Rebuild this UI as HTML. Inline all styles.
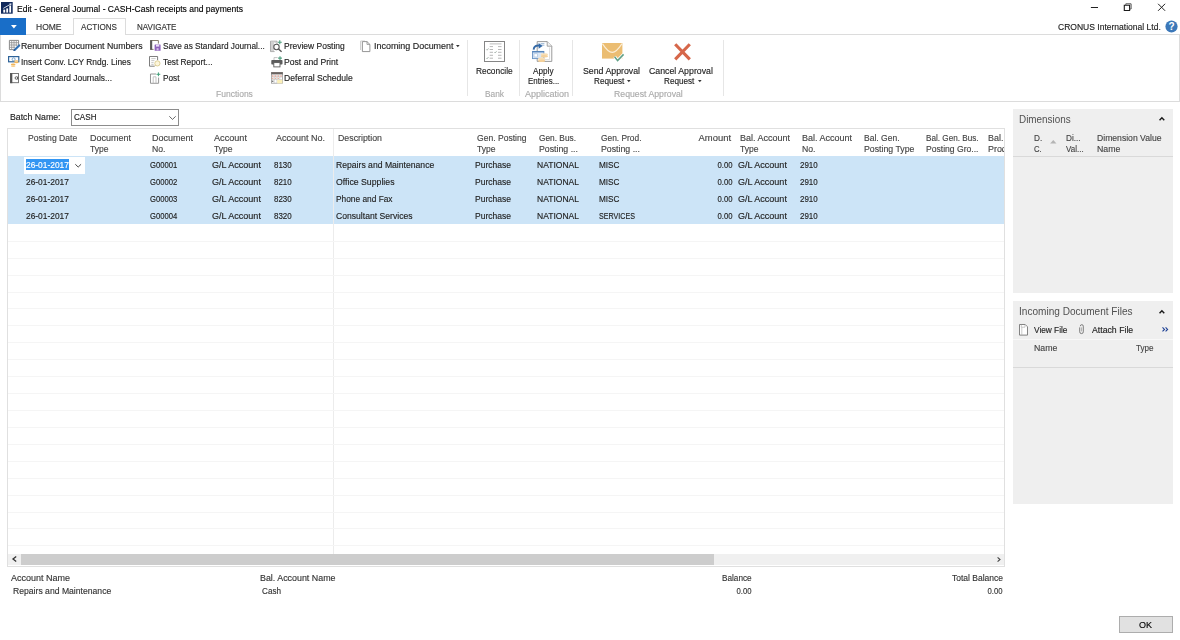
<!DOCTYPE html>
<html lang="en">
<head>
<meta charset="utf-8">
<title>Edit - General Journal - CASH-Cash receipts and payments</title>
<style>
html,body{margin:0;padding:0;}
body{width:1180px;height:640px;overflow:hidden;background:#fff;position:relative;font-family:"Liberation Sans",sans-serif;font-size:9px;color:#222;}
.t{position:absolute;white-space:pre;display:block;-webkit-text-stroke:0.14px;}
.b{position:absolute;box-sizing:border-box;}
svg{position:absolute;overflow:visible;}
.hl{position:absolute;left:8px;width:996px;height:1px;background:#f5f5f5;}
.sep{position:absolute;top:40px;width:1px;height:56px;background:#e6e6e6;}
</style>
</head>
<body>
<!-- ===== title bar ===== -->
<svg id="appicon" style="left:1.4px;top:2.1px" width="11.7" height="11.7" viewBox="0 0 11.7 11.7">
  <rect x="0" y="0" width="11.7" height="11.7" fill="#10295c"/>
  <rect x="2.3" y="7.6" width="1.9" height="3" fill="#fff"/>
  <rect x="5.3" y="6.4" width="1.8" height="4.2" fill="#fff"/>
  <rect x="8.3" y="3.6" width="1.8" height="7" fill="#fff"/>
  <path d="M2.3 6.4 L9.6 2.2" stroke="#e8ecf4" stroke-width="0.9" fill="none"/>
  <path d="M8.2 1.5 L10.6 1.5 L10 3.7 Z" fill="#e8ecf4"/>
</svg>
<svg id="winbtns" style="left:1085px;top:0" width="95" height="16" viewBox="0 0 95 16">
  <path d="M5.9 7.5 H13" stroke="#222" stroke-width="1" fill="none"/>
  <path d="M39.3 5.3 H44.6 V10.5 H39.3 Z" stroke="#1a1a1a" stroke-width="1.1" fill="none"/>
  <path d="M40.8 5.3 V3.8 H46.1 V9 H44.6" stroke="#555" stroke-width="1" fill="none"/>
  <path d="M73.1 3.8 L80.1 10.8 M80.1 3.8 L73.1 10.8" stroke="#222" stroke-width="1" fill="none"/>
</svg>
<!-- help -->
<svg id="help" style="left:1165.4px;top:20.1px" width="13" height="13" viewBox="0 0 13 13">
  <circle cx="6.5" cy="6.5" r="6.1" fill="#3c78b9"/>
  <text x="6.5" y="10" font-family="Liberation Sans, sans-serif" font-weight="bold" font-size="10" fill="#fff" text-anchor="middle">?</text>
</svg>

<!-- ===== tab strip ===== -->
<div class="b" id="ribbon" style="left:0;top:34px;width:1179.5px;height:68px;border:1px solid #dcdcdc;background:#fff"></div>
<div class="b" id="appbtn" style="left:0;top:18px;width:26px;height:16.6px;background:#196ec8"></div>
<svg style="left:10.8px;top:24.7px" width="5.8" height="3.5" viewBox="0 0 7 4"><path d="M0 0 H7 L3.5 4 Z" fill="#fff"/></svg>
<div class="b" id="acttab" style="left:73px;top:18px;width:52.5px;height:17px;border:1px solid #dcdcdc;border-bottom:none;background:#fff"></div>

<!-- ===== ribbon separators ===== -->
<div class="sep" style="left:467px"></div>
<div class="sep" style="left:519px"></div>
<div class="sep" style="left:572px"></div>
<div class="sep" style="left:723px"></div>

<!-- ===== ribbon small icons (12x12) ===== -->
<!-- Renumber Document Numbers: grid + blue pencil -->
<svg style="left:8.8px;top:40.3px" width="11" height="11" viewBox="0 0 11 11">
  <path d="M0.4 0.4 H9.6 V5 M0.4 0.4 V9.6 H4.6" stroke="#7d7d7d" stroke-width="0.9" fill="none"/>
  <path d="M0.4 2.7 H9.6 M0.4 5 H8.6 M0.4 7.3 H6.2 M2.7 0.4 V9.6 M5 0.4 V8.6 M7.3 0.4 V6.2" stroke="#8f8f8f" stroke-width="0.8" fill="none"/>
  <path d="M5.6 10 L10.2 5.4" stroke="#2f6fb3" stroke-width="2.1" stroke-linecap="round" fill="none"/>
  <path d="M4.1 11 L5 8.9 L6.3 10.2 Z" fill="#274f87"/>
</svg>
<!-- Insert Conv. LCY Rndg. Lines: banknote + coins -->
<svg style="left:8.3px;top:56.2px" width="11.4" height="11.2" viewBox="0 0 11.4 11.2">
  <rect x="0.6" y="0.6" width="10.2" height="5.2" fill="#fff" stroke="#2e6399" stroke-width="1.2"/>
  <circle cx="5.6" cy="3.3" r="1.5" fill="none" stroke="#5b8fc2" stroke-width="0.8"/>
  <ellipse cx="8.4" cy="6.3" rx="2.2" ry="1" fill="#f3b65a"/>
  <ellipse cx="8.4" cy="4.9" rx="2.2" ry="1" fill="#f7cf8e"/>
  <ellipse cx="5.2" cy="8.4" rx="2.3" ry="0.9" fill="#f3b65a"/>
  <ellipse cx="5.2" cy="10.1" rx="2.3" ry="0.9" fill="#f7cf8e"/>
</svg>
<!-- Get Standard Journals: book -->
<svg style="left:9.9px;top:73.1px" width="9" height="10.4" viewBox="0 0 9 10.4">
  <rect x="0.5" y="0.5" width="8" height="9.2" fill="#fff" stroke="#6a6a6a" stroke-width="0.9"/>
  <rect x="0.2" y="0.2" width="2.1" height="10" fill="#555"/>
  <circle cx="6.4" cy="5" r="1.3" fill="none" stroke="#555" stroke-width="0.9"/>
  <path d="M7.7 3.6 V6.4" stroke="#555" stroke-width="0.8"/>
</svg>
<!-- Save as Standard Journal: book + purple floppy -->
<svg style="left:150.3px;top:40.3px" width="10.8" height="11" viewBox="0 0 10.8 11">
  <path d="M0.5 0.5 H8.4 V3.6 M0.5 0.5 V9.4 H3.6" fill="none" stroke="#7a6f5e" stroke-width="0.9"/>
  <rect x="0.2" y="0.2" width="2" height="9.6" fill="#5a5a5a"/>
  <rect x="4.6" y="4.6" width="6" height="6.2" rx="0.5" fill="#8f63bb"/>
  <rect x="6" y="4.6" width="3.2" height="2" fill="#e9def5"/>
  <rect x="6.6" y="8.2" width="2" height="2.2" fill="#d4c0ea"/>
</svg>
<!-- Test Report: doc + yellow circle -->
<svg style="left:149px;top:56.2px" width="11.8" height="10.8" viewBox="0 0 11.8 10.8">
  <path d="M0.5 0.5 H8.6 V4.2 M0.5 0.5 V10.2 H5.6" fill="#fff" stroke="#6f6f6f" stroke-width="0.9"/>
  <path d="M2.3 2.6 H6.6 M2.3 4.6 H5.4 M2.3 6.6 H4.6 M2.3 8.4 H4.6" stroke="#b9b9b9" stroke-width="0.8"/>
  <circle cx="8.4" cy="7.4" r="2.6" fill="#fdf6dc" stroke="#d9c98d" stroke-width="0.9"/>
  <path d="M6.2 9.4 L5.2 10.5" stroke="#bfb07a" stroke-width="0.9"/>
</svg>
<!-- Post: doc columns + green plus -->
<svg style="left:150.3px;top:72px" width="10.6" height="11.8" viewBox="0 0 10.6 11.8">
  <path d="M0.5 2 H6 M0.5 2 V11.3 H8.6 V5.6" fill="none" stroke="#8a8a8a" stroke-width="0.9"/>
  <path d="M3.2 4.8 V11 M6 4.8 V11 M3.2 4.8 H6" stroke="#b4b4b4" stroke-width="0.8" fill="none"/>
  <path d="M8.4 0.4 V4.2 M6.5 2.3 H10.3" stroke="#3f9f78" stroke-width="1"/>
</svg>
<!-- Preview Posting: doc + magnifier + plus -->
<svg style="left:270.3px;top:39.5px" width="12.2" height="12.2" viewBox="0 0 12.2 12.2">
  <path d="M0.5 1.2 H7 V4 M0.5 1.2 V11.6 H4.6" fill="none" stroke="#a3a3a3" stroke-width="0.9"/>
  <rect x="1" y="1.7" width="3" height="9.4" fill="#d2d2d2"/>
  <path d="M4.4 2.6 H6.4" stroke="#c4c4c4" stroke-width="0.8"/>
  <circle cx="6.5" cy="7" r="2.7" fill="#fff" stroke="#555" stroke-width="1.1"/>
  <path d="M8.5 9 L11.6 11.8" stroke="#555" stroke-width="1.4"/>
  <path d="M9.8 0.2 V4.2 M7.8 2.2 H11.8" stroke="#4c9d7c" stroke-width="1.1"/>
</svg>
<!-- Post and Print: printer + plus -->
<svg style="left:270.6px;top:56.4px" width="12" height="11.4" viewBox="0 0 12 11.4">
  <path d="M3 4 V1.6 H6.6" fill="none" stroke="#b5b5b5" stroke-width="0.8"/>
  <rect x="0.3" y="4" width="11.2" height="4.6" rx="0.8" fill="#5c5c5c"/>
  <rect x="2.8" y="6.6" width="6.2" height="4.3" fill="#fff" stroke="#5c5c5c" stroke-width="0.9"/>
  <path d="M9 0.2 V4 M7.1 2.1 H10.9" stroke="#4c9d7c" stroke-width="1.1"/>
</svg>
<!-- Deferral Schedule: calendar -->
<svg style="left:270.5px;top:72px" width="12" height="11.8" viewBox="0 0 12 11.8">
  <rect x="0.4" y="0.4" width="11.2" height="10.8" fill="#fff" stroke="#9a9a9a" stroke-width="0.8"/>
  <rect x="0.2" y="0.2" width="11.6" height="2.2" fill="#6a6360"/>
  <path d="M0.4 5 H11.6 M0.4 7.6 H11.6 M3.2 2.4 V11 M6 2.4 V11 M8.8 2.4 V11" stroke="#bdbdbd" stroke-width="0.6"/>
  <path d="M1 4 H11" stroke="#d9705a" stroke-width="0.9" stroke-dasharray="1.4 1.4"/>
  <path d="M1 6.4 H8.6" stroke="#e3a08a" stroke-width="0.9" stroke-dasharray="1.4 1.4"/>
  <rect x="6.2" y="7.8" width="5.2" height="3.6" fill="#fbefb8"/>
  <rect x="0.8" y="8.6" width="1.6" height="1.4" fill="#7a7a7a"/>
</svg>
<!-- Incoming Document: page -->
<svg style="left:360.2px;top:39.6px" width="10.4" height="12.2" viewBox="0 0 10.4 12.2">
  <path d="M0.6 1 H5 M0.6 1 V10" stroke="#cfcfcf" stroke-width="1.1" fill="none"/>
  <path d="M2.4 1.6 H7 L9.9 4.4 V11.6 H2.4 Z" fill="#fff" stroke="#8a8a8a" stroke-width="0.9"/>
  <path d="M7 1.6 V4.4 H9.9" fill="none" stroke="#8a8a8a" stroke-width="0.8"/>
</svg>

<!-- ===== big icons ===== -->
<!-- Reconcile -->
<svg style="left:484px;top:41px" width="21" height="21" viewBox="0 0 21 21">
  <rect x="0.5" y="0.5" width="20" height="20" fill="#fff" stroke="#858585" stroke-width="1"/>
  <path d="M5.7 2.9 H17.5" stroke="#ababab" stroke-width="0.8"/>
  <path d="M5.7 5.6 H9 M14 5.6 H17.5 M5.7 8.5 H9 M14 8.5 H17.5 M5.7 11.3 H9 M14 11.3 H17.5 M5.7 14.3 H9 M14 14.3 H17.5 M5.7 17.2 H9 M14 17.2 H17.5" stroke="#a6a6a6" stroke-width="0.8"/>
  <path d="M2.3 8.4 L3.1 9.2 L4.5 7.4 M10.4 11.2 L11.2 12 L12.6 10.2 M2.3 17 L3.1 17.8 L4.5 16" stroke="#9aa8a0" stroke-width="0.8" fill="none"/>
</svg>
<!-- Apply Entries -->
<svg style="left:532px;top:41px" width="20.6" height="22" viewBox="0 0 20.6 22">
  <path d="M5.2 0.6 H15.2 L19.8 5.2 V20.4 H5.2 Z" fill="#fff" stroke="#8f8f8f" stroke-width="0.9"/>
  <path d="M15.2 0.6 V5.2 H19.8" fill="#f1f1f1" stroke="#8f8f8f" stroke-width="0.8"/>
  <path d="M17.6 6.4 V18.6 H9" fill="none" stroke="#d6d6d6" stroke-width="0.9"/>
  <path d="M8.6 2.6 H12.4 M8.6 4.2 H12.4" stroke="#86a7c9" stroke-width="0.8"/>
  <path d="M1.6 8.6 C1.8 5.2 4.6 4 7.6 4.6" stroke="#3469a6" stroke-width="1.9" fill="none"/>
  <path d="M6.6 1.9 L10.6 5 L6.6 7.8 Z" fill="#3469a6"/>
  <rect x="0.5" y="10.4" width="11.4" height="7.2" fill="#dbe7f5" stroke="#6a93c4" stroke-width="0.9"/>
  <rect x="0.5" y="10.2" width="11.4" height="1.2" fill="#4f7fb8"/>
  <rect x="2" y="12.8" width="3.6" height="3.2" fill="#fff" stroke="#9dbbdc" stroke-width="0.6"/>
  <ellipse cx="12.4" cy="13.4" rx="3.6" ry="1.2" fill="#f8deb4"/>
  <ellipse cx="12.4" cy="15.2" rx="3.6" ry="1.2" fill="#f5d19a"/>
  <ellipse cx="9.6" cy="17.8" rx="3.6" ry="1.2" fill="#f8deb4"/>
  <ellipse cx="9.6" cy="19.8" rx="3.6" ry="1.3" fill="#f5d19a"/>
</svg>
<!-- Send Approval Request -->
<svg style="left:601.7px;top:43.3px" width="22.4" height="19.4" viewBox="0 0 22.4 19.4">
  <rect x="0" y="0" width="20.4" height="15.6" fill="#ebbd72"/>
  <path d="M0.4 0.6 C4 6.2 7.6 9.4 10.2 9.4 C12.8 9.4 16.4 6.2 20 0.6" stroke="#fbeed7" stroke-width="1.1" fill="none"/>
  <path d="M12.6 13.8 L15.6 17.6 L21.6 11.4" stroke="#fff" stroke-width="3.2" fill="none"/>
  <path d="M12.6 13.8 L15.6 17.6 L21.6 11.4" stroke="#5fa086" stroke-width="1.5" fill="none"/>
</svg>
<!-- Cancel Approval Request -->
<svg style="left:673.8px;top:42.8px" width="17" height="17.6" viewBox="0 0 17 17.6">
  <path d="M1.2 1.2 L15.8 16.4 M15.8 1.2 L1.2 16.4" stroke="#d6674a" stroke-width="3.1" fill="none"/>
</svg>


<!-- ===== batch name ===== -->
<div class="b" id="combo" style="left:71px;top:109px;width:108px;height:16.5px;border:1px solid #8c8c8c;background:#fff"></div>
<svg style="left:168.5px;top:115.5px" width="7" height="4" viewBox="0 0 7 4"><path d="M0.3 0.3 L3.5 3.4 L6.7 0.3" stroke="#555" stroke-width="0.9" fill="none"/></svg>

<!-- ===== grid ===== -->
<div class="b" id="grid" style="left:7px;top:128px;width:998px;height:438.5px;border:1px solid #e0e0e0;background:#fff"></div>
<div class="b" id="selrows" style="left:8px;top:156.3px;width:996px;height:68px;background:#cce4f7"></div>
<div class="b" id="frozen" style="left:333px;top:129px;width:1px;height:425px;background:#ececec"></div>
<div class="b" id="actcell" style="left:24px;top:157px;width:61px;height:16.8px;background:#fff"></div>
<div class="b" id="seltext" style="left:26px;top:159.2px;width:43.3px;height:10.6px;background:#3396f3"></div>
<svg style="left:75px;top:164px" width="6.4" height="3.6" viewBox="0 0 7 4"><path d="M0.3 0.3 L3.5 3.4 L6.7 0.3" stroke="#444" stroke-width="1.1" fill="none"/></svg>
<div class="hl" style="top:240.8px"></div>
<div class="hl" style="top:257.72px"></div>
<div class="hl" style="top:274.64px"></div>
<div class="hl" style="top:291.56px"></div>
<div class="hl" style="top:308.48px"></div>
<div class="hl" style="top:325.4px"></div>
<div class="hl" style="top:342.32px"></div>
<div class="hl" style="top:359.24px"></div>
<div class="hl" style="top:376.16px"></div>
<div class="hl" style="top:393.08px"></div>
<div class="hl" style="top:410.0px"></div>
<div class="hl" style="top:426.92px"></div>
<div class="hl" style="top:443.84px"></div>
<div class="hl" style="top:460.76px"></div>
<div class="hl" style="top:477.68px"></div>
<div class="hl" style="top:494.6px"></div>
<div class="hl" style="top:511.52px"></div>
<div class="hl" style="top:528.44px"></div>
<div class="hl" style="top:545.36px"></div>
<div class="b" style="left:984px;top:130px;width:20.4px;height:26px;overflow:hidden;will-change:transform">
  <span class="t" style="left:4px;top:2.9px;line-height:11px;color:#444;transform:scaleX(.99);transform-origin:0 50%">Bal.</span>
  <span class="t" style="left:4px;top:14px;line-height:11px;color:#444;transform:scaleX(.99);transform-origin:0 50%">Prod. ...</span>
</div>
<!-- scrollbar -->
<div class="b" id="sbtrack" style="left:8px;top:553.7px;width:996px;height:11.6px;background:#f0f0f0"></div>
<div class="b" id="sbthumb" style="left:21px;top:553.7px;width:692.5px;height:11.6px;background:#cdcdcd"></div>
<svg style="left:11.5px;top:556.2px" width="5" height="6" viewBox="0 0 5 6"><path d="M4.2 0.5 L1 3 L4.2 5.5" stroke="#333" stroke-width="1.3" fill="none"/></svg>
<svg style="left:996.5px;top:556.7px" width="4" height="5" viewBox="0 0 4 5"><path d="M0.6 0.4 L3 2.5 L0.6 4.6" stroke="#444" stroke-width="1.1" fill="none"/></svg>

<!-- ===== OK button ===== -->
<div class="b" id="okbtn" style="left:1119px;top:616.2px;width:53.7px;height:16.7px;border:1px solid #adadad;background:#e1e1e1"></div>

<!-- ===== right panels ===== -->
<div class="b" id="dimpanel" style="left:1013.3px;top:109px;width:159.3px;height:184.4px;background:#efefef"></div>
<div class="b" style="left:1013.3px;top:156px;width:159.3px;height:1px;background:#d9d9d9"></div>
<svg style="left:1159.2px;top:117.3px" width="5.8" height="3.8" viewBox="0 0 6 4"><path d="M0.5 3.5 L3 0.9 L5.5 3.5" stroke="#1a1a1a" stroke-width="1.5" fill="none"/></svg>
<svg style="left:1049.6px;top:140px" width="6.6" height="3.6" viewBox="0 0 7 4"><path d="M0 4 L3.5 0 L7 4 Z" fill="#b4b4b4"/></svg>

<div class="b" id="incpanel" style="left:1013.3px;top:301.4px;width:159.3px;height:203px;background:#efefef"></div>
<div class="b" style="left:1013.3px;top:339px;width:159.3px;height:1px;background:#f8f8f8"></div>
<div class="b" style="left:1013.3px;top:367px;width:159.3px;height:1px;background:#d9d9d9"></div>
<svg style="left:1159.2px;top:309.8px" width="5.8" height="3.8" viewBox="0 0 6 4"><path d="M0.5 3.5 L3 0.9 L5.5 3.5" stroke="#1a1a1a" stroke-width="1.5" fill="none"/></svg>
<svg style="left:1162px;top:327.2px" width="6.4" height="4.8" viewBox="0 0 6.4 4.8"><path d="M0.5 0.4 L2.5 2.4 L0.5 4.4 M3.6 0.4 L5.6 2.4 L3.6 4.4" stroke="#1c3f94" stroke-width="1.1" fill="none"/></svg>
<!-- view file icon -->
<svg style="left:1019px;top:324.2px" width="9" height="11.6" viewBox="0 0 9 11.6"><path d="M0.5 0.5 H6.2 L8.5 2.8 V11.1 H0.5 Z" fill="#fff" stroke="#757575" stroke-width="0.9"/><path d="M2.3 0.8 V3.2 H6 V0.8 M2.8 3.2 V11" stroke="#b5b5b5" stroke-width="0.7" fill="none"/></svg>
<!-- paperclip -->
<svg style="left:1079px;top:324.4px" width="5" height="10.4" viewBox="0 0 5 10.4"><path d="M0.7 3.4 V7.8 a1.8 1.8 0 0 0 3.6 0 V2.2 a1.5 1.5 0 0 0 -3 0" stroke="#6f6f6f" stroke-width="0.9" fill="none"/><path d="M2.5 3.4 V7.4" stroke="#9a9a9a" stroke-width="0.7" fill="none"/></svg>

<!-- dropdown triangles in ribbon -->
<svg style="left:455.8px;top:44.6px" width="3.6" height="2.2" viewBox="0 0 4 2.4"><path d="M0 0 H4 L2 2.4 Z" fill="#333"/></svg>
<svg style="left:627px;top:79.6px" width="3.6" height="2.2" viewBox="0 0 4 2.4"><path d="M0 0 H4 L2 2.4 Z" fill="#333"/></svg>
<svg style="left:697.6px;top:79.6px" width="3.6" height="2.2" viewBox="0 0 4 2.4"><path d="M0 0 H4 L2 2.4 Z" fill="#333"/></svg>

<!-- ===== all text ===== -->
<div id="txt" style="position:absolute;left:0;top:0;width:1180px;height:640px;will-change:transform">
<span class="t" style="left:17px;top:3.9px;font-size:9px;line-height:11px;color:#000;transform:scaleX(0.951);transform-origin:0 50%;">Edit - General Journal - CASH-Cash receipts and payments</span>
<span class="t" style="left:1058.2px;top:21.9px;font-size:9px;line-height:11px;color:#222;transform:scaleX(0.947);transform-origin:0 50%;">CRONUS International Ltd.</span>
<span class="t" style="left:36px;top:22.2px;font-size:9px;line-height:11px;color:#333;transform:scaleX(0.944);transform-origin:0 50%;">HOME</span>
<span class="t" style="left:81px;top:22.2px;font-size:9px;line-height:11px;color:#333;transform:scaleX(0.9);transform-origin:0 50%;">ACTIONS</span>
<span class="t" style="left:137px;top:22.2px;font-size:9px;line-height:11px;color:#333;transform:scaleX(0.894);transform-origin:0 50%;">NAVIGATE</span>
<span class="t" style="left:21.2px;top:41.1px;font-size:9px;line-height:11px;color:#222;transform:scaleX(0.976);transform-origin:0 50%;">Renumber Document Numbers</span>
<span class="t" style="left:21.2px;top:56.6px;font-size:9px;line-height:11px;color:#222;transform:scaleX(0.93);transform-origin:0 50%;">Insert Conv. LCY Rndg. Lines</span>
<span class="t" style="left:21.2px;top:72.7px;font-size:9px;line-height:11px;color:#222;transform:scaleX(0.933);transform-origin:0 50%;">Get Standard Journals...</span>
<span class="t" style="left:162.5px;top:41.1px;font-size:9px;line-height:11px;color:#222;transform:scaleX(0.916);transform-origin:0 50%;">Save as Standard Journal...</span>
<span class="t" style="left:162.5px;top:56.6px;font-size:9px;line-height:11px;color:#222;transform:scaleX(0.925);transform-origin:0 50%;">Test Report...</span>
<span class="t" style="left:162.5px;top:72.7px;font-size:9px;line-height:11px;color:#222;transform:scaleX(0.916);transform-origin:0 50%;">Post</span>
<span class="t" style="left:284.2px;top:41.1px;font-size:9px;line-height:11px;color:#222;transform:scaleX(0.942);transform-origin:0 50%;">Preview Posting</span>
<span class="t" style="left:284.2px;top:56.6px;font-size:9px;line-height:11px;color:#222;transform:scaleX(0.957);transform-origin:0 50%;">Post and Print</span>
<span class="t" style="left:284.2px;top:72.7px;font-size:9px;line-height:11px;color:#222;transform:scaleX(0.955);transform-origin:0 50%;">Deferral Schedule</span>
<span class="t" style="left:373.5px;top:41.1px;font-size:9px;line-height:11px;color:#222;transform:scaleX(0.993);transform-origin:0 50%;">Incoming Document</span>
<span class="t" style="left:216.3px;top:88.8px;font-size:9px;line-height:11px;color:#aaa;transform:scaleX(0.945);transform-origin:0 50%;">Functions</span>
<span class="t" style="left:485px;top:88.8px;font-size:9px;line-height:11px;color:#aaa;transform:scaleX(0.926);transform-origin:0 50%;">Bank</span>
<span class="t" style="left:525px;top:88.8px;font-size:9px;line-height:11px;color:#aaa;transform:scaleX(0.999);transform-origin:0 50%;">Application</span>
<span class="t" style="left:614.4px;top:88.8px;font-size:9px;line-height:11px;color:#aaa;transform:scaleX(0.968);transform-origin:0 50%;">Request Approval</span>
<span class="t" style="left:476.3px;top:65.9px;font-size:9px;line-height:11px;color:#222;transform:scaleX(0.928);transform-origin:0 50%;">Reconcile</span>
<span class="t" style="left:533px;top:65.9px;font-size:9px;line-height:11px;color:#222;transform:scaleX(0.91);transform-origin:0 50%;">Apply</span>
<span class="t" style="left:528px;top:75.5px;font-size:9px;line-height:11px;color:#222;transform:scaleX(0.881);transform-origin:0 50%;">Entries...</span>
<span class="t" style="left:582.5px;top:65.9px;font-size:9px;line-height:11px;color:#222;transform:scaleX(0.974);transform-origin:0 50%;">Send Approval</span>
<span class="t" style="left:593.7px;top:75.5px;font-size:9px;line-height:11px;color:#222;transform:scaleX(0.904);transform-origin:0 50%;">Request</span>
<span class="t" style="left:649.3px;top:65.9px;font-size:9px;line-height:11px;color:#222;transform:scaleX(0.975);transform-origin:0 50%;">Cancel Approval</span>
<span class="t" style="left:664px;top:75.5px;font-size:9px;line-height:11px;color:#222;transform:scaleX(0.904);transform-origin:0 50%;">Request</span>
<span class="t" style="left:10px;top:112.2px;font-size:9px;line-height:11px;color:#222;transform:scaleX(0.971);transform-origin:0 50%;">Batch Name:</span>
<span class="t" style="left:73.5px;top:112.2px;font-size:9px;line-height:11px;color:#222;transform:scaleX(0.899);transform-origin:0 50%;">CASH</span>
<span class="t" style="left:28.1px;top:132.9px;font-size:9px;line-height:11px;color:#444;transform:scaleX(0.955);transform-origin:0 50%;">Posting Date</span>
<span class="t" style="left:90px;top:132.9px;font-size:9px;line-height:11px;color:#444;transform:scaleX(0.999);transform-origin:0 50%;">Document</span>
<span class="t" style="left:90px;top:144.0px;font-size:9px;line-height:11px;color:#444;transform:scaleX(0.948);transform-origin:0 50%;">Type</span>
<span class="t" style="left:152px;top:132.9px;font-size:9px;line-height:11px;color:#444;transform:scaleX(0.999);transform-origin:0 50%;">Document</span>
<span class="t" style="left:152px;top:144.0px;font-size:9px;line-height:11px;color:#444;transform:scaleX(0.963);transform-origin:0 50%;">No.</span>
<span class="t" style="left:214px;top:132.9px;font-size:9px;line-height:11px;color:#444;transform:scaleX(1.014);transform-origin:0 50%;">Account</span>
<span class="t" style="left:214px;top:144.0px;font-size:9px;line-height:11px;color:#444;transform:scaleX(0.948);transform-origin:0 50%;">Type</span>
<span class="t" style="left:276.3px;top:132.9px;font-size:9px;line-height:11px;color:#444;transform:scaleX(0.999);transform-origin:0 50%;">Account No.</span>
<span class="t" style="left:338px;top:132.9px;font-size:9px;line-height:11px;color:#444;transform:scaleX(0.977);transform-origin:0 50%;">Description</span>
<span class="t" style="left:477px;top:132.9px;font-size:9px;line-height:11px;color:#444;transform:scaleX(0.951);transform-origin:0 50%;">Gen. Posting</span>
<span class="t" style="left:477px;top:144.0px;font-size:9px;line-height:11px;color:#444;transform:scaleX(0.948);transform-origin:0 50%;">Type</span>
<span class="t" style="left:539px;top:132.9px;font-size:9px;line-height:11px;color:#444;transform:scaleX(0.924);transform-origin:0 50%;">Gen. Bus.</span>
<span class="t" style="left:539px;top:144.0px;font-size:9px;line-height:11px;color:#444;transform:scaleX(0.974);transform-origin:0 50%;">Posting ...</span>
<span class="t" style="left:601px;top:132.9px;font-size:9px;line-height:11px;color:#444;transform:scaleX(0.93);transform-origin:0 50%;">Gen. Prod.</span>
<span class="t" style="left:601px;top:144.0px;font-size:9px;line-height:11px;color:#444;transform:scaleX(0.974);transform-origin:0 50%;">Posting ...</span>
<span class="t" style="right:449px;top:132.9px;font-size:9px;line-height:11px;color:#444;transform:scaleX(1.047);transform-origin:100% 50%;">Amount</span>
<span class="t" style="left:740px;top:132.9px;font-size:9px;line-height:11px;color:#444;transform:scaleX(0.999);transform-origin:0 50%;">Bal. Account</span>
<span class="t" style="left:740px;top:144.0px;font-size:9px;line-height:11px;color:#444;transform:scaleX(0.948);transform-origin:0 50%;">Type</span>
<span class="t" style="left:802px;top:132.9px;font-size:9px;line-height:11px;color:#444;transform:scaleX(0.999);transform-origin:0 50%;">Bal. Account</span>
<span class="t" style="left:802px;top:144.0px;font-size:9px;line-height:11px;color:#444;transform:scaleX(0.963);transform-origin:0 50%;">No.</span>
<span class="t" style="left:864px;top:132.9px;font-size:9px;line-height:11px;color:#444;transform:scaleX(0.946);transform-origin:0 50%;">Bal. Gen.</span>
<span class="t" style="left:864px;top:144.0px;font-size:9px;line-height:11px;color:#444;transform:scaleX(0.973);transform-origin:0 50%;">Posting Type</span>
<span class="t" style="left:926px;top:132.9px;font-size:9px;line-height:11px;color:#444;transform:scaleX(0.905);transform-origin:0 50%;">Bal. Gen. Bus.</span>
<span class="t" style="left:926px;top:144.0px;font-size:9px;line-height:11px;color:#444;transform:scaleX(0.954);transform-origin:0 50%;">Posting Gro...</span>
<span class="t" style="left:25.8px;top:160.1px;font-size:9px;line-height:11px;color:#fff;transform:scaleX(0.932);transform-origin:0 50%;">26-01-2017</span>
<span class="t" style="left:150px;top:160.1px;font-size:9px;line-height:11px;color:#222;transform:scaleX(0.852);transform-origin:0 50%;">G00001</span>
<span class="t" style="left:211.9px;top:160.1px;font-size:9px;line-height:11px;color:#222;transform:scaleX(1.004);transform-origin:0 50%;">G/L Account</span>
<span class="t" style="left:273.7px;top:160.1px;font-size:9px;line-height:11px;color:#222;transform:scaleX(0.884);transform-origin:0 50%;">8130</span>
<span class="t" style="left:335.6px;top:160.1px;font-size:9px;line-height:11px;color:#222;transform:scaleX(0.958);transform-origin:0 50%;">Repairs and Maintenance</span>
<span class="t" style="left:475px;top:160.1px;font-size:9px;line-height:11px;color:#222;transform:scaleX(0.947);transform-origin:0 50%;">Purchase</span>
<span class="t" style="left:537px;top:160.1px;font-size:9px;line-height:11px;color:#222;transform:scaleX(0.947);transform-origin:0 50%;">NATIONAL</span>
<span class="t" style="left:599px;top:160.1px;font-size:9px;line-height:11px;color:#222;transform:scaleX(0.911);transform-origin:0 50%;">MISC</span>
<span class="t" style="right:447px;top:160.1px;font-size:9px;line-height:11px;color:#222;transform:scaleX(0.856);transform-origin:100% 50%;">0.00</span>
<span class="t" style="left:738.3px;top:160.1px;font-size:9px;line-height:11px;color:#222;transform:scaleX(1.004);transform-origin:0 50%;">G/L Account</span>
<span class="t" style="left:800.3px;top:160.1px;font-size:9px;line-height:11px;color:#222;transform:scaleX(0.884);transform-origin:0 50%;">2910</span>
<span class="t" style="left:25.8px;top:177.02px;font-size:9px;line-height:11px;color:#222;transform:scaleX(0.932);transform-origin:0 50%;">26-01-2017</span>
<span class="t" style="left:150px;top:177.02px;font-size:9px;line-height:11px;color:#222;transform:scaleX(0.852);transform-origin:0 50%;">G00002</span>
<span class="t" style="left:211.9px;top:177.02px;font-size:9px;line-height:11px;color:#222;transform:scaleX(1.004);transform-origin:0 50%;">G/L Account</span>
<span class="t" style="left:273.7px;top:177.02px;font-size:9px;line-height:11px;color:#222;transform:scaleX(0.884);transform-origin:0 50%;">8210</span>
<span class="t" style="left:335.6px;top:177.02px;font-size:9px;line-height:11px;color:#222;transform:scaleX(0.969);transform-origin:0 50%;">Office Supplies</span>
<span class="t" style="left:475px;top:177.02px;font-size:9px;line-height:11px;color:#222;transform:scaleX(0.947);transform-origin:0 50%;">Purchase</span>
<span class="t" style="left:537px;top:177.02px;font-size:9px;line-height:11px;color:#222;transform:scaleX(0.947);transform-origin:0 50%;">NATIONAL</span>
<span class="t" style="left:599px;top:177.02px;font-size:9px;line-height:11px;color:#222;transform:scaleX(0.911);transform-origin:0 50%;">MISC</span>
<span class="t" style="right:447px;top:177.02px;font-size:9px;line-height:11px;color:#222;transform:scaleX(0.856);transform-origin:100% 50%;">0.00</span>
<span class="t" style="left:738.3px;top:177.02px;font-size:9px;line-height:11px;color:#222;transform:scaleX(1.004);transform-origin:0 50%;">G/L Account</span>
<span class="t" style="left:800.3px;top:177.02px;font-size:9px;line-height:11px;color:#222;transform:scaleX(0.884);transform-origin:0 50%;">2910</span>
<span class="t" style="left:25.8px;top:193.94px;font-size:9px;line-height:11px;color:#222;transform:scaleX(0.932);transform-origin:0 50%;">26-01-2017</span>
<span class="t" style="left:150px;top:193.94px;font-size:9px;line-height:11px;color:#222;transform:scaleX(0.852);transform-origin:0 50%;">G00003</span>
<span class="t" style="left:211.9px;top:193.94px;font-size:9px;line-height:11px;color:#222;transform:scaleX(1.004);transform-origin:0 50%;">G/L Account</span>
<span class="t" style="left:273.7px;top:193.94px;font-size:9px;line-height:11px;color:#222;transform:scaleX(0.884);transform-origin:0 50%;">8230</span>
<span class="t" style="left:335.6px;top:193.94px;font-size:9px;line-height:11px;color:#222;transform:scaleX(0.926);transform-origin:0 50%;">Phone and Fax</span>
<span class="t" style="left:475px;top:193.94px;font-size:9px;line-height:11px;color:#222;transform:scaleX(0.947);transform-origin:0 50%;">Purchase</span>
<span class="t" style="left:537px;top:193.94px;font-size:9px;line-height:11px;color:#222;transform:scaleX(0.947);transform-origin:0 50%;">NATIONAL</span>
<span class="t" style="left:599px;top:193.94px;font-size:9px;line-height:11px;color:#222;transform:scaleX(0.911);transform-origin:0 50%;">MISC</span>
<span class="t" style="right:447px;top:193.94px;font-size:9px;line-height:11px;color:#222;transform:scaleX(0.856);transform-origin:100% 50%;">0.00</span>
<span class="t" style="left:738.3px;top:193.94px;font-size:9px;line-height:11px;color:#222;transform:scaleX(1.004);transform-origin:0 50%;">G/L Account</span>
<span class="t" style="left:800.3px;top:193.94px;font-size:9px;line-height:11px;color:#222;transform:scaleX(0.884);transform-origin:0 50%;">2910</span>
<span class="t" style="left:25.8px;top:210.86px;font-size:9px;line-height:11px;color:#222;transform:scaleX(0.932);transform-origin:0 50%;">26-01-2017</span>
<span class="t" style="left:150px;top:210.86px;font-size:9px;line-height:11px;color:#222;transform:scaleX(0.852);transform-origin:0 50%;">G00004</span>
<span class="t" style="left:211.9px;top:210.86px;font-size:9px;line-height:11px;color:#222;transform:scaleX(1.004);transform-origin:0 50%;">G/L Account</span>
<span class="t" style="left:273.7px;top:210.86px;font-size:9px;line-height:11px;color:#222;transform:scaleX(0.884);transform-origin:0 50%;">8320</span>
<span class="t" style="left:335.6px;top:210.86px;font-size:9px;line-height:11px;color:#222;transform:scaleX(0.956);transform-origin:0 50%;">Consultant Services</span>
<span class="t" style="left:475px;top:210.86px;font-size:9px;line-height:11px;color:#222;transform:scaleX(0.947);transform-origin:0 50%;">Purchase</span>
<span class="t" style="left:537px;top:210.86px;font-size:9px;line-height:11px;color:#222;transform:scaleX(0.947);transform-origin:0 50%;">NATIONAL</span>
<span class="t" style="left:599px;top:210.86px;font-size:9px;line-height:11px;color:#222;transform:scaleX(0.794);transform-origin:0 50%;">SERVICES</span>
<span class="t" style="right:447px;top:210.86px;font-size:9px;line-height:11px;color:#222;transform:scaleX(0.856);transform-origin:100% 50%;">0.00</span>
<span class="t" style="left:738.3px;top:210.86px;font-size:9px;line-height:11px;color:#222;transform:scaleX(1.004);transform-origin:0 50%;">G/L Account</span>
<span class="t" style="left:800.3px;top:210.86px;font-size:9px;line-height:11px;color:#222;transform:scaleX(0.884);transform-origin:0 50%;">2910</span>
<span class="t" style="left:10.5px;top:572.7px;font-size:9px;line-height:11px;color:#333;transform:scaleX(0.999);transform-origin:0 50%;">Account Name</span>
<span class="t" style="left:12.5px;top:585.9px;font-size:9px;line-height:11px;color:#333;transform:scaleX(0.958);transform-origin:0 50%;">Repairs and Maintenance</span>
<span class="t" style="left:259.5px;top:572.7px;font-size:9px;line-height:11px;color:#333;transform:scaleX(0.986);transform-origin:0 50%;">Bal. Account Name</span>
<span class="t" style="left:262px;top:585.9px;font-size:9px;line-height:11px;color:#333;transform:scaleX(0.904);transform-origin:0 50%;">Cash</span>
<span class="t" style="left:722.4px;top:572.7px;font-size:9px;line-height:11px;color:#333;transform:scaleX(0.91);transform-origin:0 50%;">Balance</span>
<span class="t" style="right:428px;top:585.9px;font-size:9px;line-height:11px;color:#333;transform:scaleX(0.856);transform-origin:100% 50%;">0.00</span>
<span class="t" style="left:951.5px;top:572.7px;font-size:9px;line-height:11px;color:#333;transform:scaleX(0.944);transform-origin:0 50%;">Total Balance</span>
<span class="t" style="right:177.5px;top:585.9px;font-size:9px;line-height:11px;color:#333;transform:scaleX(0.856);transform-origin:100% 50%;">0.00</span>
<span class="t" style="left:1145.4px;margin-left:-6.51px;top:619.9px;font-size:9px;line-height:11px;color:#000;transform:scaleX(0.999);transform-origin:50% 50%;">OK</span>
<span class="t" style="left:1018.8px;top:113.5px;font-size:10px;line-height:12px;color:#505050;transform:scaleX(0.989);transform-origin:0 50%;-webkit-text-stroke:0;">Dimensions</span>
<span class="t" style="left:1034.3px;top:132.9px;font-size:9px;line-height:11px;color:#444;transform:scaleX(0.911);transform-origin:0 50%;">D.</span>
<span class="t" style="left:1034.3px;top:144.0px;font-size:9px;line-height:11px;color:#444;transform:scaleX(0.856);transform-origin:0 50%;">C.</span>
<span class="t" style="left:1065.9px;top:132.9px;font-size:9px;line-height:11px;color:#444;transform:scaleX(0.912);transform-origin:0 50%;">Di...</span>
<span class="t" style="left:1065.9px;top:144.0px;font-size:9px;line-height:11px;color:#444;transform:scaleX(0.887);transform-origin:0 50%;">Val...</span>
<span class="t" style="left:1096.9px;top:132.9px;font-size:9px;line-height:11px;color:#444;transform:scaleX(0.957);transform-origin:0 50%;">Dimension Value</span>
<span class="t" style="left:1096.9px;top:144.0px;font-size:9px;line-height:11px;color:#444;transform:scaleX(0.974);transform-origin:0 50%;">Name</span>
<span class="t" style="left:1018.8px;top:305.7px;font-size:10px;line-height:12px;color:#505050;transform:scaleX(1.007);transform-origin:0 50%;-webkit-text-stroke:0;">Incoming Document Files</span>
<span class="t" style="left:1033.6px;top:325.0px;font-size:9px;line-height:11px;color:#222;transform:scaleX(0.921);transform-origin:0 50%;">View File</span>
<span class="t" style="left:1091.8px;top:325.0px;font-size:9px;line-height:11px;color:#222;transform:scaleX(0.969);transform-origin:0 50%;">Attach File</span>
<span class="t" style="left:1034.3px;top:342.8px;font-size:9px;line-height:11px;color:#444;transform:scaleX(0.974);transform-origin:0 50%;">Name</span>
<span class="t" style="left:1135.8px;top:342.8px;font-size:9px;line-height:11px;color:#444;transform:scaleX(0.897);transform-origin:0 50%;">Type</span>
</div>
</body>
</html>
